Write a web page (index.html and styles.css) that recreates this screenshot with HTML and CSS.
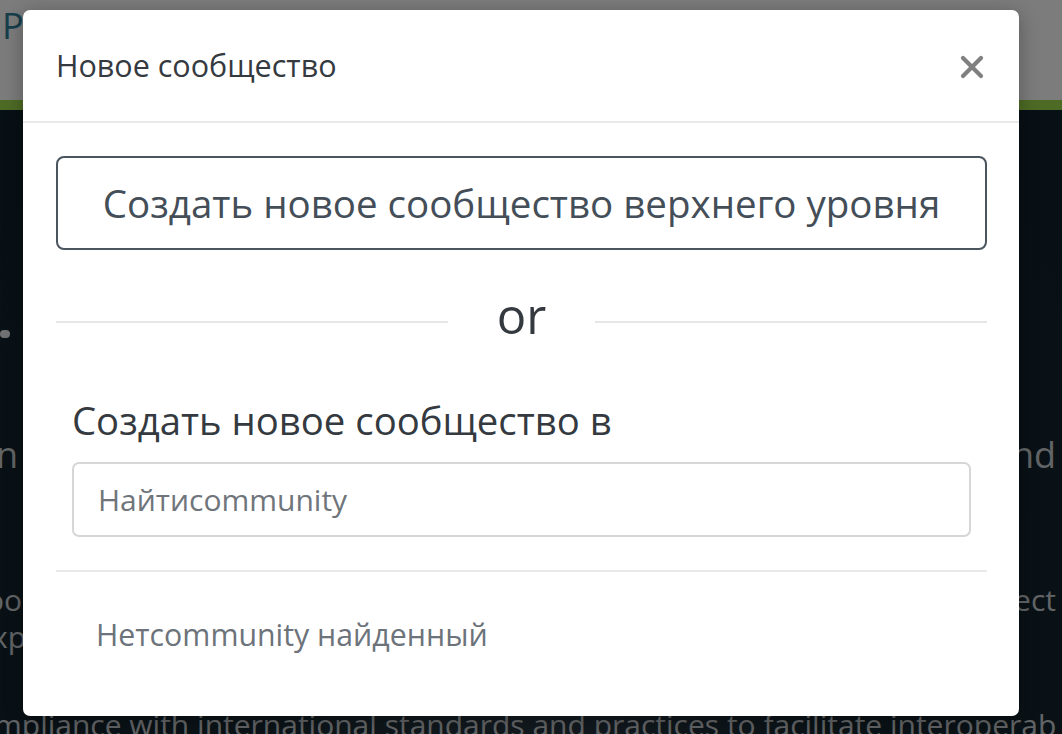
FILE: index.html
```html
<!DOCTYPE html>
<html lang="ru">
<head>
<meta charset="utf-8">
<title>Новое сообщество</title>
<link rel="stylesheet" href="styles.css">
</head>
<body>
<div class="page">
  <header class="site-header">
    <span class="brand">P</span>
  </header>
  <div class="accent"></div>
  <main class="hero">
    <div class="hero-dot"></div>
    <div class="hero-row hero-row-1"><span>n</span><span>nd</span></div>
    <div class="hero-row hero-row-2"><span>oo</span><span>ect</span></div>
    <div class="hero-row hero-row-3"><span>xp</span></div>
    <div class="hero-line">mpliance with international standards and practices to facilitate interoperab</div>
  </main>
</div>
<div class="backdrop"></div>
<div class="modal" role="dialog">
  <div class="modal-header">
    <h5 class="modal-title">Новое сообщество</h5>
    <button class="close" aria-label="Close">
      <svg viewBox="0 0 24 24" width="24" height="24"><path d="M3 3 L21 21 M21 3 L3 21" stroke="#808080" stroke-width="4.2" stroke-linecap="round" fill="none"/></svg>
    </button>
  </div>
  <div class="modal-body">
    <button class="btn-top">Создать новое сообщество верхнего уровня</button>
    <div class="divider"><span class="line"></span><span class="or">or</span><span class="line"></span></div>
    <div class="form-group">
      <label class="form-label">Создать новое сообщество в</label>
      <input class="form-input" type="text" placeholder="Найтиcommunity">
    </div>
    <hr class="sep">
    <div class="empty">Нетcommunity найденный</div>
  </div>
</div>
</body>
</html>
```

FILE: styles.css
```css
* { box-sizing: border-box; }
html, body { margin: 0; padding: 0; }
body {
  width: 1062px;
  height: 734px;
  overflow: hidden;
  font-family: "Open Sans", "Noto Sans", sans-serif;
  position: relative;
  background: #0d1e28;
}
.page { display: flex; flex-direction: column; height: 734px; }
.site-header {
  height: 100px;
  background: #f9f9f9;
  padding: 4px 0 0 2px;
}
.brand { color: #2f7d95; font-size: 36px; line-height: 44px; }
.accent { height: 10px; background: #9cd64a; }
.hero {
  flex: 1;
  background: radial-gradient(ellipse at 50% 90%, #283640 0%, #16262f 40%, #0f202a 100%);
  color: #c4c9cc;
  font-size: 36px;
  position: relative;
}
.hero-dot { position: absolute; left: 0; top: 220px; width: 10px; height: 8px; border-radius: 4px; background: #dfe2e4; }
.hero-row { display: flex; justify-content: space-between; padding-right: 6px; }
.hero-row span:first-child { margin-left: -4px; }
.hero-row-1 { margin-top: 320px; }
.hero-row-2 { margin-top: 100px; font-size: 30px; }
.hero-row-2 span:first-child { margin-left: -14px; }
.hero-row-3 { font-size: 30px; margin-top: -4px; }
.hero-row-3 span:first-child { margin-left: -8px; }
.hero-line { position: absolute; left: -6px; top: 594px; font-size: 30px; white-space: nowrap; }
.backdrop {
  position: absolute; inset: 0;
  background: rgba(0, 0, 0, 0.5);
}
.modal {
  position: absolute;
  left: 23px; top: 10px;
  width: 996px; height: 706px;
  background: #fff;
  border-radius: 7px;
  display: flex; flex-direction: column;
  box-shadow: 0 4px 20px rgba(0,0,0,0.3);
}
.modal-header {
  height: 113px;
  border-bottom: 2px solid #e9e9e9;
  display: flex; align-items: center; justify-content: space-between;
  padding: 0 33px 0 33px;
}
.modal-title {
  margin: 0;
  font-weight: 400;
  font-size: 30.5px;
  color: #343a40;
  padding-bottom: 2px;
}
.close {
  border: 0; background: none; padding: 0; margin: 2px 2px 0 0;
  width: 24px; height: 24px; display: flex;
}
.modal-body {
  padding: 33px 32px 0 33px;
  display: flex; flex-direction: column;
}
.btn-top {
  height: 94px;
  width: 100%;
  border: 2px solid #4b555f;
  border-radius: 8px;
  background: #fff;
  color: #444e58;
  font-family: inherit;
  font-size: 38.5px;
  padding: 0;
}
.divider {
  display: flex; align-items: center;
  margin-top: 42px;
  height: 60px;
}
.divider .line { flex: 1; height: 2px; background: #e6e6e6; }
.divider .or {
  font-size: 49px; color: #343a40;
  padding: 0 49px; line-height: 60px; margin-top: -14px;
}
.form-group { padding: 0 16px; margin-top: 40px; display: flex; flex-direction: column; }
.form-label { font-size: 38.3px; color: #343a40; line-height: 56px; }
.form-input {
  margin-top: 14px;
  height: 75px;
  border: 2px solid #d6d6d6;
  border-radius: 7px;
  padding: 0 24px;
  font-family: inherit;
  font-size: 30px;
  color: #333;
}
.form-input::placeholder { color: #6f757b; opacity: 1; }
.sep { margin: 33px 0 0 0; border: 0; border-top: 2px solid #e9e9e9; }
.empty { padding: 43px 0 0 40px; font-size: 30.3px; color: #6c737a; line-height: 40px; }
```
